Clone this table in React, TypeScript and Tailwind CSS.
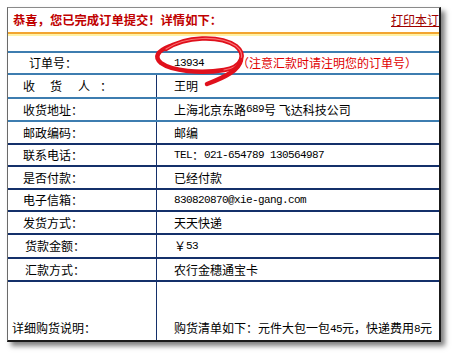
import React from "react";

const cjk = "font-['SimSun','Noto_Sans_CJK_SC',sans-serif]";
const mono = "font-['Liberation_Mono',monospace] text-[11px] tracking-[-0.6px]";

type Row = { h: string; top: string; label: React.ReactNode; value: React.ReactNode; noDivider?: boolean; pl: string };

const blue = "border-t-[#3d7db0]";
const navy = "border-t-[#14306a]";

export default function App() {
  const rows: Row[] = [
    {
      h: "h-[22px]",
      top: blue,
      pl: "pl-[21px]",
      noDivider: true,
      label: "订单号：",
      value: (
        <>
          <span className={mono}>13934</span>
          <span className="ml-[33px] text-[#e00000] text-[12px]">（注意汇款时请注明您的订单号）</span>
        </>
      ),
    },
    {
      h: "h-[24px]",
      top: blue,
      pl: "pl-[15px]",
      label: (
        <>
          <span>收</span>
          <span className="ml-[15px]">货</span>
          <span className="ml-[16px]">人</span>
          <span className="ml-[10px]">：</span>
        </>
      ),
      value: "王明",
    },
    {
      h: "h-[23px]",
      top: blue,
      pl: "pl-[15px]",
      label: "收货地址：",
      value: (
        <>
          上海北京东路<span className={mono}>689</span>号 飞达科技公司
        </>
      ),
    },
    { h: "h-[23px]", top: blue, pl: "pl-[15px]", label: "邮政编码：", value: "邮编" },
    {
      h: "h-[22px]",
      top: navy,
      pl: "pl-[15px]",
      label: "联系电话：",
      value: (
        <>
          <span className={mono}>TEL</span>：<span className={mono}>021-654789 130564987</span>
        </>
      ),
    },
    { h: "h-[23px]", top: navy, pl: "pl-[15px]", label: "是否付款：", value: "已经付款" },
    {
      h: "h-[22px]",
      top: navy,
      pl: "pl-[15px]",
      label: "电子信箱：",
      value: <span className={mono}>830820870@xie-gang.com</span>,
    },
    { h: "h-[23px]", top: navy, pl: "pl-[15px]", label: "发货方式：", value: "天天快递" },
    {
      h: "h-[24px]",
      top: navy,
      pl: "pl-[17px]",
      label: "货款金额：",
      value: (
        <>
          ￥<span className={mono}>53</span>
        </>
      ),
    },
    { h: "h-[23px]", top: navy, pl: "pl-[17px]", label: "汇款方式：", value: "农行金穗通宝卡" },
  ];

  return (
    <div className={`relative w-[454px] h-[357px] bg-white pt-[7px] pl-[7px] ${cjk} text-[12px] text-black`}>
      <div className="w-[434px] h-[335px] flex flex-col overflow-hidden border-t border-l border-t-[#8a8a8a] border-l-[#6a6a6a] border-r-2 border-b-2 border-r-[#1a1a1a] border-b-[#1a1a1a] shadow-[4px_4px_5px_rgba(0,0,0,0.5)] bg-white">
        <div className="h-[24px] flex items-center pl-[5px] shrink-0">
          <span className="font-bold text-[#c00000] text-[12.3px] whitespace-nowrap">恭喜，您已完成订单提交！详情如下：</span>
          <span className="ml-auto mr-0 text-[#a00000] underline whitespace-nowrap shrink-0">打印本订</span>
        </div>
        <div className="h-[2px] bg-[#f2a531] shrink-0" />
        <div className="h-[2px] bg-[#fff2a6] shrink-0" />
        <div className="h-[15px] shrink-0" />
        {rows.map((r, i) => (
          <div key={i} className={`${r.h} shrink-0 flex border-t-2 ${r.top}`}>
            <div className={`w-[149px] flex items-center ${r.pl} border-r ${r.noDivider ? "border-r-transparent" : "border-r-[#14306a]"} whitespace-nowrap`}>
              {r.label}
            </div>
            <div className="flex-1 flex items-center pl-[17px] whitespace-nowrap">{r.value}</div>
          </div>
        ))}
        <div className="flex-1 flex border-t-2 border-t-[#14306a]">
          <div className="w-[149px] flex items-end pl-[4px] pb-[3px] border-r border-r-[#14306a] whitespace-nowrap">详细购货说明：</div>
          <div className="flex-1 flex items-end pl-[17px] pb-[3px] whitespace-nowrap">
            购货清单如下：元件大包一包 <span className={mono}>45</span>元，快递费用<span className={mono}>8</span>元
          </div>
        </div>
      </div>
      <svg className="absolute left-0 top-0 pointer-events-none" width="454" height="357" viewBox="0 0 454 357">
        <path
          d="M 166 49 C 185 36, 220 35, 236 46 C 246 54, 243 67, 224 70 C 200 74, 172 71, 161 63 C 154 57, 157 51, 170 46"
          fill="none"
          stroke="#e0101c"
          strokeWidth="4.5"
          strokeLinecap="round"
        />
        <path
          d="M 166 49 C 185 36, 220 35, 236 46 C 246 54, 243 67, 224 70"
          fill="none"
          stroke="#ff8a8a"
          strokeWidth="1.2"
          strokeLinecap="round"
          opacity="0.8"
        />
        <path d="M 241 60 C 239 70, 226 77, 207 84" fill="none" stroke="#e0101c" strokeWidth="4.5" strokeLinecap="round" />
      </svg>
    </div>
  );
}
